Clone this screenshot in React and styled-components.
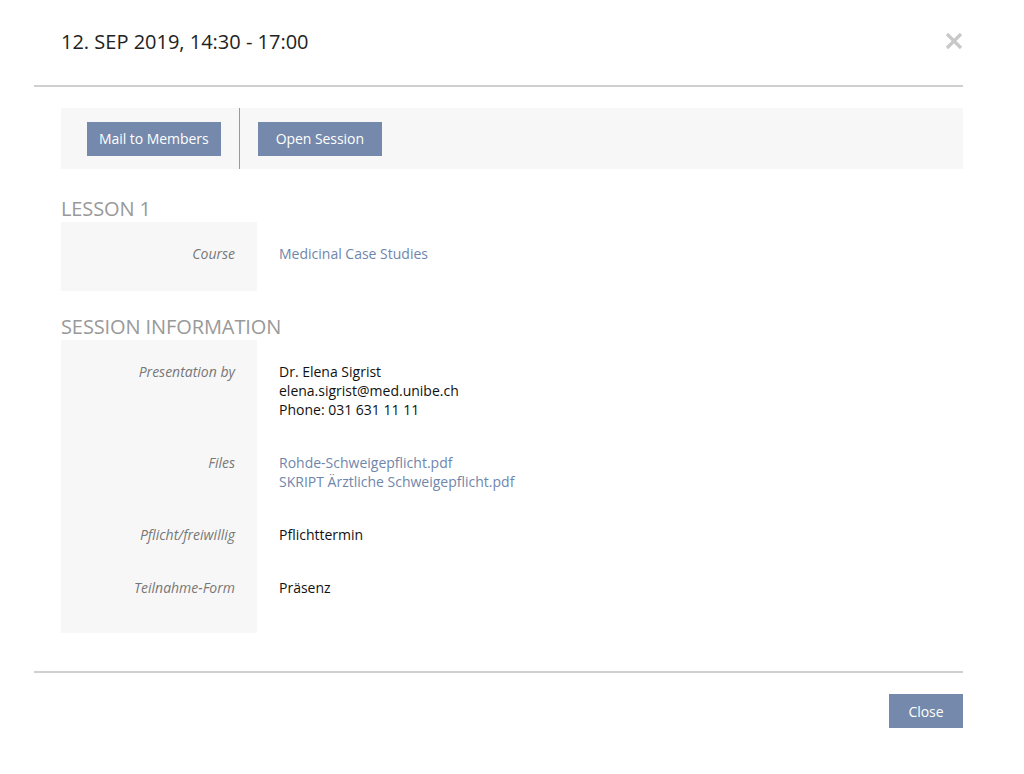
import React from "react";
import styled, { createGlobalStyle } from "styled-components";

const Global = createGlobalStyle`
  html, body { margin: 0; padding: 0; background: #fff; }
  body { font-family: "Open Sans", "Liberation Sans", sans-serif; color: #222; }
  * { box-sizing: border-box; }
`;

const Modal = styled.div`
  margin-left: 34px;
  width: 929px;
`;

const Header = styled.header`
  display: flex;
  align-items: flex-start;
  justify-content: space-between;
  padding: 28px 0 30px 27px;
  border-bottom: 2px solid #d0d0d0;
`;

const Title = styled.h1`
  margin: 0;
  font-size: 20px;
  line-height: 27px;
  font-weight: 400;
  color: #222;
`;

const CloseX = styled.button`
  border: 0;
  background: none;
  padding: 0;
  margin-top: 4px;
  width: 18px;
  height: 18px;
  cursor: pointer;
  display: block;
`;

const Body = styled.div`
  padding: 21px 0 38px 27px;
`;

const Toolbar = styled.div`
  display: flex;
  align-items: center;
  gap: 18px;
  height: 61px;
  padding-left: 26px;
  background: #f7f7f7;
`;

const Divider = styled.div`
  width: 1px;
  align-self: stretch;
  background: #999;
`;

const paddings = {
  compact: "0 12px",
  normal: "0 18px",
  wide: "0 19.5px",
};

const Button = styled.button`
  height: 34px;
  padding: ${(p) => paddings[p.$size || "normal"]};
  border: 0;
  background: #7489ab;
  color: #fff;
  font-family: "Open Sans", "Liberation Sans", sans-serif;
  font-size: 14px;
  letter-spacing: -0.05px;
  cursor: pointer;
`;

const Heading = styled.h2`
  margin: ${(p) => p.$top}px 0 0;
  font-size: 20px;
  line-height: 27px;
  font-weight: 400;
  color: #999;
  letter-spacing: -0.1px;
  text-transform: uppercase;
`;

const Section = styled.dl`
  margin: 0;
  display: grid;
  grid-template-columns: 196px 1fr;
  font-size: 14px;
  line-height: 19px;
  background: linear-gradient(to right, #f7f7f7 196px, transparent 196px);
  padding-bottom: ${(p) => p.$bottom}px;
`;

const Label = styled.dt`
  padding: 22px 22px 12px 0;
  text-align: right;
  font-style: italic;
  color: #777;
`;

const Value = styled.dd`
  margin: 0;
  padding: 22px 0 12px 22px;
  color: #111;
`;

const Link = styled.a`
  display: block;
  color: #6f86ab;
  text-decoration: none;
`;

const Line = styled.div``;

const Footer = styled.footer`
  display: flex;
  justify-content: flex-end;
  padding-top: 21px;
  border-top: 2px solid #d0d0d0;
`;

export default function App() {
  return (
    <>
      <Global />
      <Modal>
        <Header>
          <Title>12. SEP 2019, 14:30 - 17:00</Title>
          <CloseX aria-label="close">
            <svg width="18" height="18" viewBox="0 0 18 18">
              <path d="M2 2 L16 16 M16 2 L2 16" stroke="#c8c8c8" strokeWidth="3.2" strokeLinecap="butt" />
            </svg>
          </CloseX>
        </Header>
        <Body>
          <Toolbar>
            <Button $size="compact">Mail to Members</Button>
            <Divider />
            <Button>Open Session</Button>
          </Toolbar>

          <Heading $top={26}>Lesson 1</Heading>
          <Section $bottom={16}>
            <Label>Course</Label>
            <Value>
              <Link href="#">Medicinal Case Studies</Link>
            </Value>
          </Section>

          <Heading $top={22}>Session Information</Heading>
          <Section $bottom={24}>
            <Label>Presentation by</Label>
            <Value>
              <Line>Dr. Elena Sigrist</Line>
              <Line>elena.sigrist@med.unibe.ch</Line>
              <Line>Phone: 031 631 11 11</Line>
            </Value>
            <Label>Files</Label>
            <Value>
              <Link href="#">Rohde-Schweigepflicht.pdf</Link>
              <Link href="#">SKRIPT Ärztliche Schweigepflicht.pdf</Link>
            </Value>
            <Label>Pflicht/freiwillig</Label>
            <Value>Pflichttermin</Value>
            <Label>Teilnahme-Form</Label>
            <Value>Präsenz</Value>
          </Section>
        </Body>
        <Footer>
          <Button $size="wide">Close</Button>
        </Footer>
      </Modal>
    </>
  );
}
